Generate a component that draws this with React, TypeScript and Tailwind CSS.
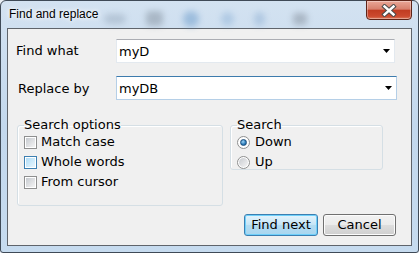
import React from "react";

const Checkbox: React.FC<{ hover?: boolean }> = ({ hover }) => (
  <span
    className={`flex h-[13px] w-[13px] shrink-0 items-center justify-center border bg-white ${
      hover ? "border-[#3c7fb1]" : "border-[#8e8f8f]"
    }`}
  >
    <span
      className={`h-[9px] w-[9px] ${
        hover
          ? "bg-gradient-to-br from-[#aedcf7] to-[#e8f6fd]"
          : "bg-gradient-to-br from-[#c6cacf] to-[#f4f4f4]"
      }`}
    />
  </span>
);

const Radio: React.FC<{ checked?: boolean }> = ({ checked }) => (
  <span className="flex h-[13px] w-[13px] shrink-0 items-center justify-center rounded-full border border-[#8e8f8f] bg-white">
    {checked ? (
      <span className="h-[7px] w-[7px] rounded-full border border-[#1d4f7c] bg-[radial-gradient(circle_at_40%_35%,#9fd4f5,#2a7ab8_60%,#17558a)]" />
    ) : (
      <span className="h-[9px] w-[9px] rounded-full bg-gradient-to-br from-[#c8cbd0] to-[#f5f5f5]" />
    )}
  </span>
);

const Arrow = () => (
  <svg width="7" height="4" viewBox="0 0 7 4" className="shrink-0">
    <polygon points="0,0 7,0 3.5,4" fill="#000" />
  </svg>
);

export default function App() {
  return (
    <div className="h-[253px] w-[419px] bg-[#e9eef4] font-['DejaVu_Sans',sans-serif] text-[13px] text-black">
      <div className="flex h-full flex-col rounded-t-[6px] rounded-b-[3px] border border-[#3f4a57] bg-gradient-to-b from-[#d3e2f1] via-[#c3d8ed] to-[#c6dbef]">
        {/* title bar */}
        <div className="flex h-[27px] shrink-0 items-center">
          <span className="ml-[8px] pb-[1px] font-['Liberation_Sans',Arial,sans-serif] text-[12px] leading-[14px] [text-shadow:0_0_6px_#fff,0_0_4px_#fff]">
            Find and replace
          </span>
          {/* blurred desktop behind the glass */}
          <div className="mt-[8px] flex flex-1 items-center opacity-40 blur-[3px]">
            <span className="ml-[6px] h-[10px] w-[22px] rounded-full bg-[#8a9cb0]" />
            <span className="ml-[20px] h-[15px] w-[17px] rounded-[4px] bg-[#6f7b88]" />
            <span className="ml-[20px] h-[16px] w-[16px] rounded-full bg-[#4f88c0]" />
            <span className="ml-[22px] h-[14px] w-[13px] rounded-full bg-[#7fa8d2]" />
            <span className="ml-[20px] h-[14px] w-[11px] rounded-full bg-[#7fa4cc]" />
            <span className="ml-[28px] h-[12px] w-[14px] rounded-[3px] bg-[#6e7884]" />
          </div>
          <div className="mr-[6px] -mt-px flex h-[20px] w-[46px] items-center justify-center self-start rounded-b-[4px] border border-[#5e2418] bg-[linear-gradient(#eaa797,#d7806d_45%,#c13c22_52%,#cc4a2f_85%,#dc7a5d)] shadow-[inset_0_0_0_1px_rgba(255,255,255,0.35)]">
            <svg width="16" height="13" viewBox="0 0 16 13">
              <path d="M3.5 2.5 L12.5 10.5 M12.5 2.5 L3.5 10.5" stroke="#4a4a4a" strokeWidth="4.4" strokeLinecap="square" />
              <path d="M3.5 2.5 L12.5 10.5 M12.5 2.5 L3.5 10.5" stroke="#fff" strokeWidth="2.4" strokeLinecap="square" />
            </svg>
          </div>
        </div>

        {/* client area */}
        <div className="mx-[6px] flex h-[218px] shrink-0 flex-col border border-[#5f646b] bg-[#f0f0f0] pt-[10px]">
          <div className="flex h-[24px] items-center">
            <span className="w-[108px] pl-[8px]">Find what</span>
            <div className="flex h-[24px] w-[279px] items-center border border-[#e3e9ef] border-t-[#abadb3] bg-white pl-[2px] pr-[4px]">
              <span className="flex-1 pt-[1px]">myD</span>
              <Arrow />
            </div>
          </div>

          <div className="mt-[13px] flex h-[24px] items-center">
            <span className="w-[108px] pl-[10px] pt-[2px]">Replace by</span>
            <div className="flex h-[24px] w-[281px] items-center border border-[#b5cfe7] border-t-[#3d7bad] bg-white pl-[2px] pr-[4px]">
              <span className="flex-1 pt-[1px]">myDB</span>
              <Arrow />
            </div>
          </div>

          <div className="mt-[18px] flex items-start">
            <fieldset className="ml-[9px] h-[88px] w-[206px] rounded-[3px] border border-[#d5dfe5] shadow-[inset_1px_1px_0_#fff]">
              <legend className="ml-[6px] leading-[14px]">Search options</legend>
              <div className="flex flex-col pl-[6px]">
                <label className="flex h-[20px] items-center gap-[4px]">
                  <Checkbox />
                  <span>Match case</span>
                </label>
                <label className="flex h-[20px] items-center gap-[4px]">
                  <Checkbox hover />
                  <span>Whole words</span>
                </label>
                <label className="flex h-[20px] items-center gap-[4px]">
                  <Checkbox />
                  <span>From cursor</span>
                </label>
              </div>
            </fieldset>

            <fieldset className="ml-[7px] h-[52px] w-[153px] rounded-[3px] border border-[#d5dfe5] shadow-[inset_1px_1px_0_#fff]">
              <legend className="ml-[6px] leading-[14px]">Search</legend>
              <div className="flex flex-col pl-[6px]">
                <label className="flex h-[20px] items-center gap-[5px]">
                  <Radio checked />
                  <span>Down</span>
                </label>
                <label className="flex h-[20px] items-center gap-[5px]">
                  <Radio />
                  <span>Up</span>
                </label>
              </div>
            </fieldset>
          </div>

          <div className="mt-[8px] flex justify-end gap-[5px] pr-[15px]">
            <button className="h-[22px] w-[74px] rounded-[3px] border border-[#3c7fb1] bg-[linear-gradient(#e5f4fc,#c4e5f6_50%,#b3dcf2_51%,#a9d6ef)] shadow-[inset_0_0_0_1px_#6fd0fa] leading-[18px]">
              Find next
            </button>
            <button className="h-[22px] w-[73px] rounded-[3px] border border-[#707070] bg-[linear-gradient(#f2f2f2,#ebebeb_50%,#dddddd_51%,#cfcfcf)] shadow-[inset_0_0_0_1px_#fcfcfc] leading-[18px]">
              Cancel
            </button>
          </div>
        </div>
      </div>
    </div>
  );
}
